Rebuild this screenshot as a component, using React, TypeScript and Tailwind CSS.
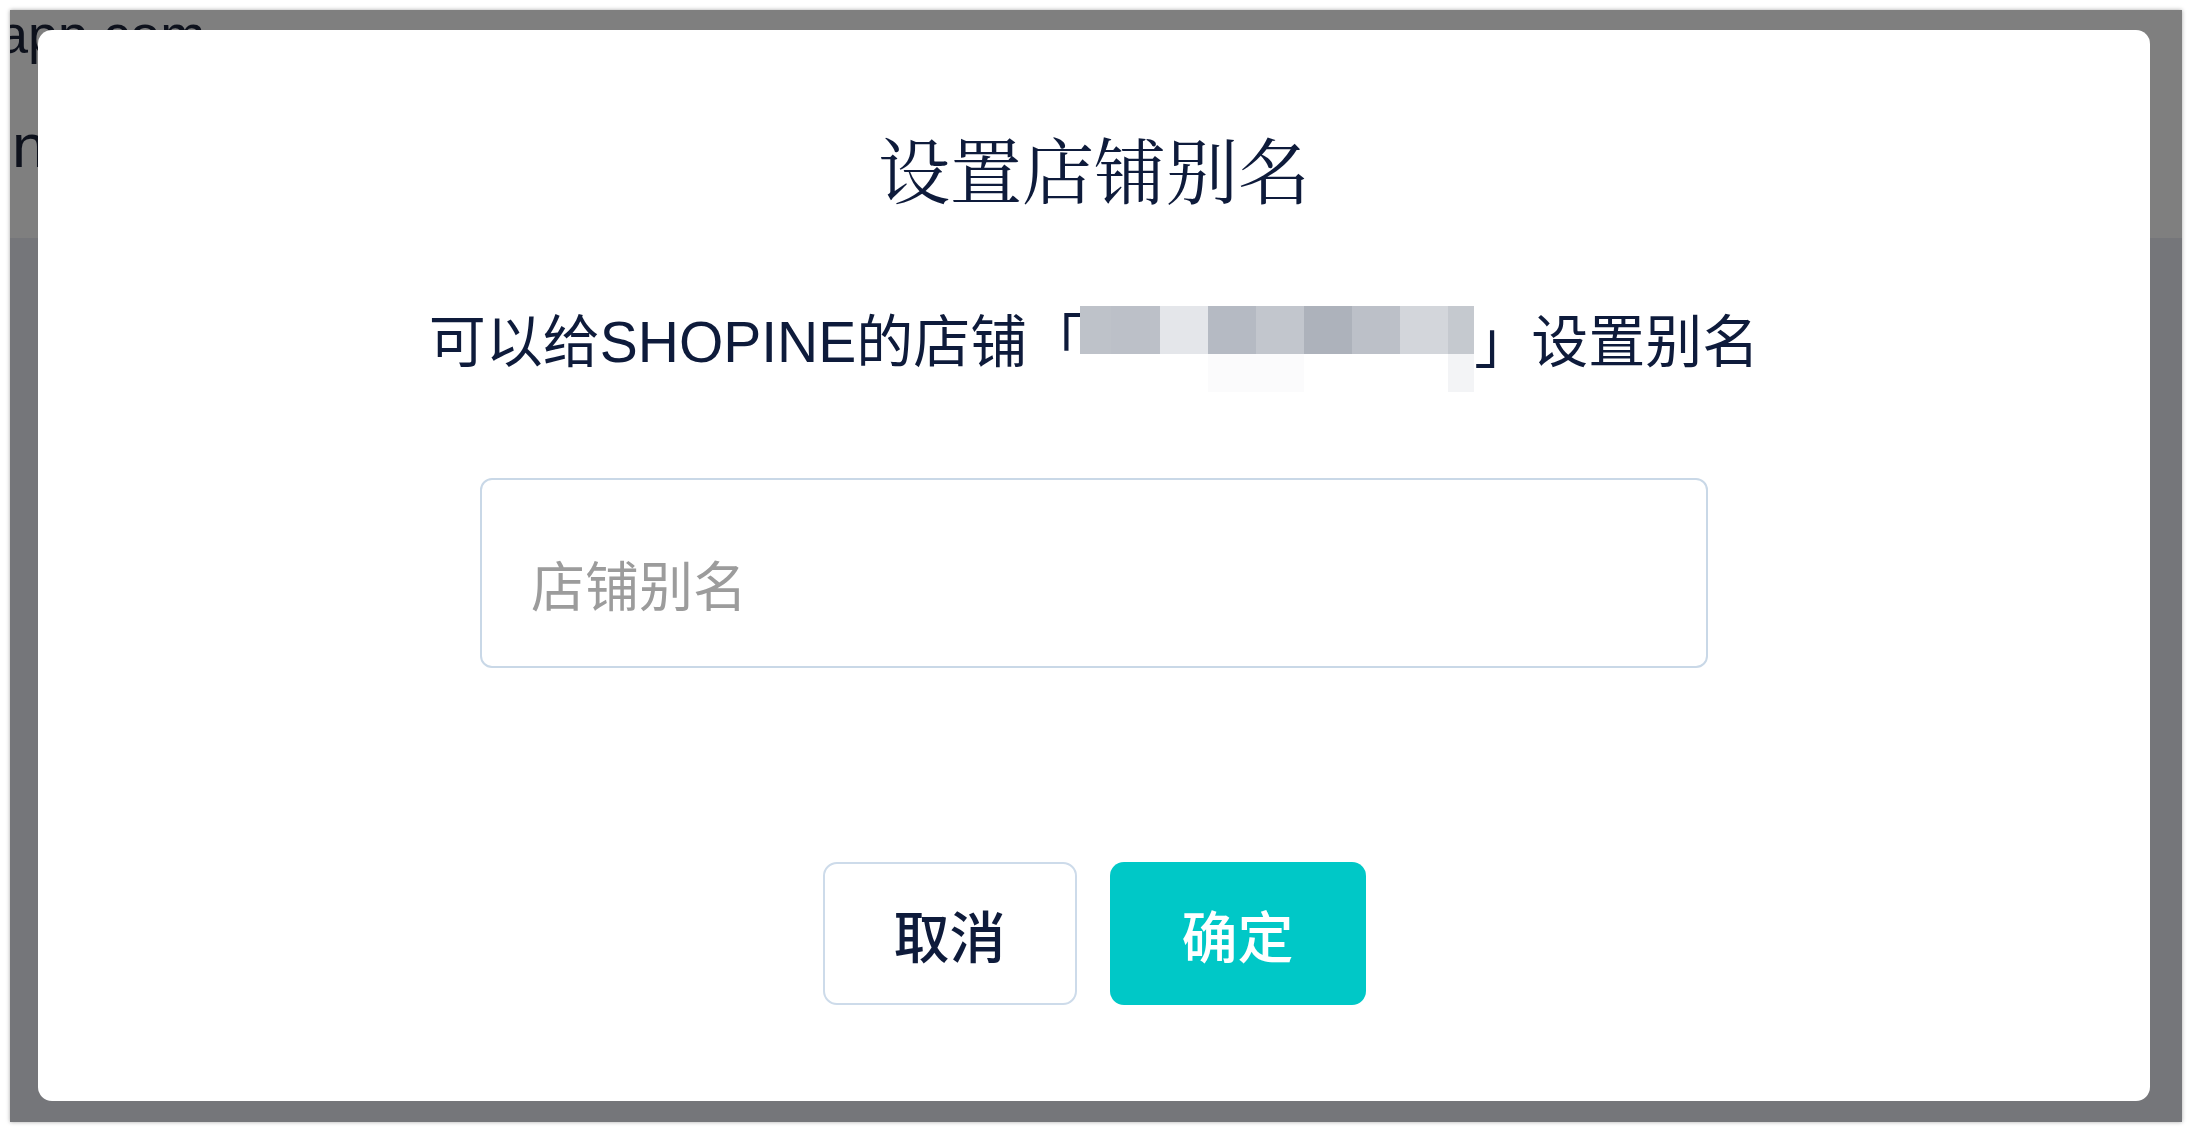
import React from "react";

const row1 = [
  { w: 31, c: "#bec2c9" },
  { w: 49, c: "#bcc0c8" },
  { w: 48, c: "#e4e6ea" },
  { w: 48, c: "#b5bac3" },
  { w: 48, c: "#c2c6cd" },
  { w: 48, c: "#adb2bb" },
  { w: 48, c: "#bcc0c8" },
  { w: 48, c: "#d3d6db" },
  { w: 26, c: "#c5c9cf" },
];
const row2 = [
  { w: 31, c: "#ffffff" },
  { w: 49, c: "#ffffff" },
  { w: 48, c: "#ffffff" },
  { w: 48, c: "#fbfbfc" },
  { w: 48, c: "#fbfbfc" },
  { w: 48, c: "#ffffff" },
  { w: 48, c: "#ffffff" },
  { w: 48, c: "#ffffff" },
  { w: 26, c: "#f3f4f6" },
];

function Mosaic() {
  return (
    <div className="flex flex-col -mt-[8px] -ml-[4px] shrink-0">
      <div className="flex h-[48px]">
        {row1.map((c, i) => (
          <div key={i} className="h-full" style={{ width: c.w, background: c.c }} />
        ))}
      </div>
      <div className="flex h-[38px]">
        {row2.map((c, i) => (
          <div key={i} className="h-full" style={{ width: c.w, background: c.c }} />
        ))}
      </div>
    </div>
  );
}

export default function App() {
  return (
    <div className="w-[2192px] h-[1132px] bg-white p-[10px] overflow-hidden">
      <div className="relative w-full h-full overflow-hidden shadow-[0_0_4px_rgba(0,0,0,0.35)]">
        {/* background page */}
        <div className="flex flex-col h-full font-['Liberation_Sans',sans-serif] text-[#1a2238]">
          <div className="h-[228px] bg-white flex flex-col">
            <div className="text-[54px] leading-none -ml-[12px] -mt-[3px]">app.com</div>
            <div className="text-[62px] leading-none ml-[2px] mt-[54px]">n</div>
          </div>
          <div className="flex-1 bg-[#eaecf4]" />
        </div>
        {/* overlay */}
        <div className="absolute inset-0 bg-black/50 pt-[20px] pl-[28px] pr-[32px] pb-[21px] flex">
          <div className="flex-1 bg-white rounded-[14px] flex flex-col items-center pt-[101px] text-[#0e1b3b]">
            <h1 className="text-[72px] leading-none font-normal font-['Noto_Serif_CJK_SC','Source_Han_Serif_SC','AR_PL_UMing_CN',serif]">
              设置店铺别名
            </h1>
            <div className="mt-[111px] flex items-start text-[57px] leading-[56px] font-['Liberation_Sans','Noto_Sans_CJK_SC',sans-serif]">
              <span>可以给SHOPINE的店铺「</span>
              <Mosaic />
              <span>」设置别名</span>
            </div>
            <input
              className="mt-[86px] w-[1228px] h-[190px] border-2 border-[#c9d8e7] rounded-[12px] pl-[49px] pt-[20px] text-[54px] outline-none font-['Noto_Sans_CJK_SC',sans-serif] placeholder:text-[#9c9c9c]"
              placeholder="店铺别名"
            />
            <div className="mt-[194px] flex gap-[33px] font-['Noto_Sans_CJK_SC',sans-serif]">
              <button className="w-[254px] h-[143px] border-2 border-[#cddbea] rounded-[14px] bg-white text-[56px] font-medium text-[#0e1b3b] flex items-center justify-center">
                取消
              </button>
              <button className="w-[256px] h-[143px] rounded-[14px] bg-[#00c8c7] text-[56px] font-medium text-white flex items-center justify-center">
                确定
              </button>
            </div>
          </div>
        </div>
      </div>
    </div>
  );
}
